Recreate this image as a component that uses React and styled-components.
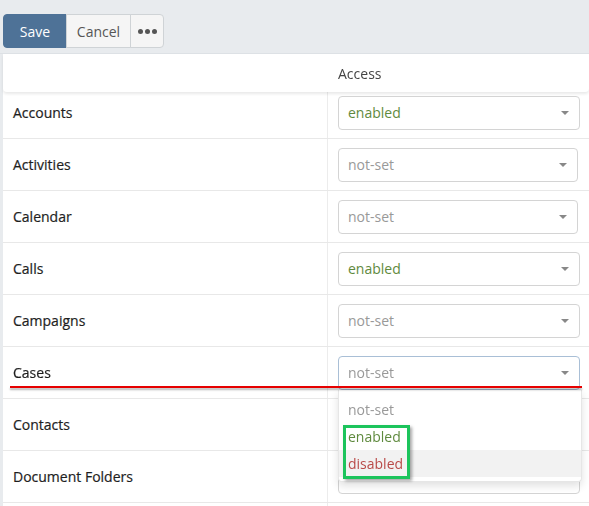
import React from 'react';
import styled, { createGlobalStyle } from 'styled-components';

const GlobalStyle = createGlobalStyle`
  html, body {
    margin: 0;
    padding: 0;
    background: #e8ebee;
    font-family: "Open Sans", "Liberation Sans", sans-serif;
    font-size: 14px;
    color: #333;
    overflow: hidden;
  }
`

const Page = styled.div`
  width: 589px;
  height: 506px;
  overflow: hidden;
`

const Toolbar = styled.div`
  display: flex;
  padding: 14px 0 5px 3px;
  border-bottom: 1px solid #dde1e5;
`

const Button = styled.button`
  height: 34px;
  padding: 0;
  font-family: inherit;
  font-size: 14px;
  border: 1px solid ${p => (p.primary ? '#4e7297' : '#cfd3d6')};
  background: ${p => (p.primary ? '#4e7297' : '#f5f5f5')};
  color: ${p => (p.primary ? '#fff' : '#555')};
  margin-left: ${p => (p.first ? 0 : -1)}px;
  border-radius: ${p => p.radius || '0'};
  display: flex;
  align-items: center;
  justify-content: center;
  width: ${p => p.w}px;
`

const Dots = styled.span`
  display: flex;
  gap: 2px;
  span {
    width: 5px;
    height: 5px;
    border-radius: 50%;
    background: #555;
  }
`

const Panel = styled.div`
  margin-left: 3px;
  background: #fff;
  position: relative;
`

const Header = styled.div`
  position: sticky;
  top: 0;
  z-index: 2;
  height: 38px;
  margin-bottom: -5px;
  display: grid;
  grid-template-columns: 325px 1fr;
  align-items: center;
  background: #fff;
  border-radius: 0 0 4px 4px;
  box-shadow: 0 2px 3px rgba(0, 0, 0, 0.09);
`

const HeadCell = styled.div`
  padding-left: 10px;
  color: #444;
`

const Row = styled.div`
  display: grid;
  grid-template-columns: 325px 1fr;
  height: 52px;
  border-bottom: 1px solid #e8e8e8;
  box-sizing: border-box;
  position: relative;
  z-index: ${p => (p.open ? 3 : 1)};
`

const Label = styled.div`
  display: flex;
  align-items: center;
  padding-left: 10px;
  color: #1e1e1e;
  -webkit-text-stroke: 0.2px #1e1e1e;
  border-right: 1px solid #ececec;
`

const Cell = styled.div`
  display: flex;
  align-items: center;
  padding-left: 10px;
  position: relative;
`

const Select = styled.div`
  width: ${p => p.w || 242}px;
  height: 34px;
  box-sizing: border-box;
  border: 1px solid ${p => (p.focus ? '#a9bfd6' : '#d4d4d4')};
  border-radius: 4px;
  display: flex;
  align-items: center;
  justify-content: space-between;
  padding: 0 10px 0 9px;
  color: ${p => p.color};
  background: #fff;
`

const Caret = styled.span`
  width: 0;
  height: 0;
  border-left: 4px solid transparent;
  border-right: 4px solid transparent;
  border-top: 4px solid #888;
`

const Menu = styled.div`
  position: absolute;
  left: 10px;
  top: 43px;
  width: 242px;
  background: #fff;
  border: 1px solid #e6e6e6;
  border-top: none;
  border-radius: 0 0 4px 4px;
  box-shadow: 0 4px 8px rgba(0, 0, 0, 0.12);
  padding: 6px 0 4px;
  z-index: 5;
`

const Option = styled.div`
  height: 27px;
  line-height: 27px;
  padding-left: 9px;
  color: ${p => p.color};
  background: ${p => (p.hover ? '#f2f2f2' : 'transparent')};
`

const RedLine = styled.div`
  position: absolute;
  left: 7px;
  width: 572px;
  top: 332px;
  height: 2px;
  background: #e60000;
  box-shadow: 0 2px 2px rgba(0, 0, 0, 0.3);
  z-index: 6;
`

const GreenBox = styled.div`
  position: absolute;
  left: 340px;
  top: 371px;
  width: 61px;
  height: 48px;
  border: 3px solid #1cc45c;
  box-shadow: 2px 2px 3px rgba(0, 0, 0, 0.35);
  z-index: 7;
`

const colors = {
  'enabled': '#5f8a3e',
  'not-set': '#999',
  'disabled': '#b94a48',
}

const rows = [
  ['Accounts', 'enabled'],
  ['Activities', 'not-set', 240],
  ['Calendar', 'not-set', 240],
  ['Calls', 'enabled'],
  ['Campaigns', 'not-set'],
  ['Cases', 'not-set', 242, true],
  ['Contacts', null],
  ['Document Folders', 'not-set'],
  ['', null],
]

const App = () => {
  return (
    <Page>
      <GlobalStyle />
      <Toolbar>
        <Button primary first w={64} radius="4px 0 0 4px">Save</Button>
        <Button w={65}>Cancel</Button>
        <Button w={34} radius="0 4px 4px 0">
          <Dots><span /><span /><span /></Dots>
        </Button>
      </Toolbar>
      <Panel>
        <Header>
          <div />
          <HeadCell>Access</HeadCell>
        </Header>
        {rows.map(([name, value, w, open], i) => (
          <Row key={i} open={open}>
            <Label>{name}</Label>
            <Cell>
              {value && (
                <Select w={w} color={colors[value]} focus={open}>
                  <span>{value}</span>
                  <Caret />
                </Select>
              )}
              {open && (
                <Menu>
                  <Option color={colors['not-set']}>not-set</Option>
                  <Option color={colors.enabled}>enabled</Option>
                  <Option color={colors.disabled} hover>disabled</Option>
                </Menu>
              )}
            </Cell>
          </Row>
        ))}
        <RedLine />
        <GreenBox />
      </Panel>
    </Page>
  )
}

export default App
